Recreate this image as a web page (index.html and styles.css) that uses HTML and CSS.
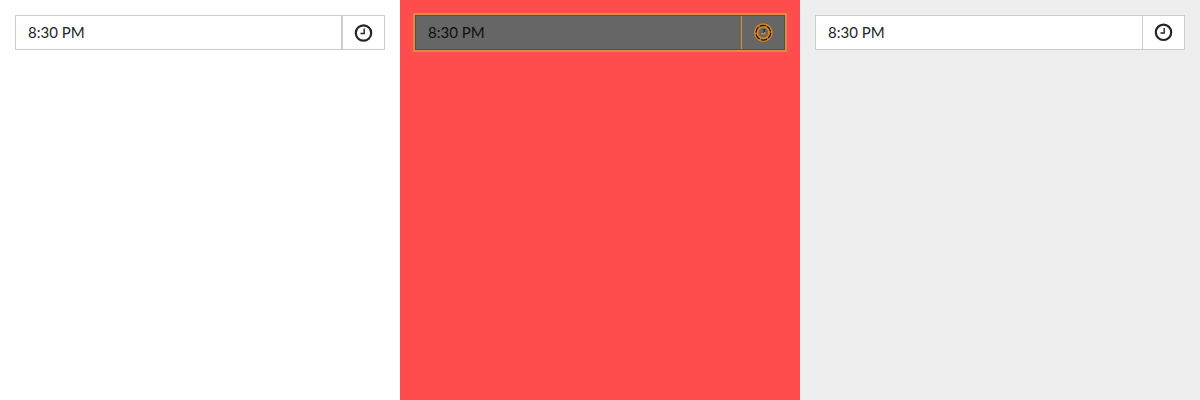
FILE: index.html
```
<!DOCTYPE html>
<html lang="en">
<head>
<meta charset="utf-8">
<title>Time picker</title>
<link rel="stylesheet" href="styles.css">
</head>
<body>
<main class="panels">
  <section class="panel">
    <div class="picker picker-double">
      <span class="value">8:30 PM</span>
      <span class="button"><svg class="clock" viewBox="0 0 20 20"><circle class="ring" cx="9.5" cy="10" r="7.7"/><path class="hands" d="M10.2 5.5V10.5H6.5"/></svg></span>
    </div>
  </section>
  <section class="panel panel-diff">
    <div class="picker picker-diff">
      <span class="value">8:30 PM</span>
      <span class="button"><svg class="clock" viewBox="0 0 20 20"><circle class="edge" cx="10.3" cy="9.7" r="8.5"/><circle class="edge" cx="10.3" cy="9.7" r="5.8"/><circle class="ring-dark" cx="10.3" cy="9.7" r="7.4"/><path class="hand-dark" d="M11.3 6V10"/><path class="hand-edge" d="M8 10.8H11.8V9"/></svg></span>
    </div>
  </section>
  <section class="panel panel-gray">
    <div class="picker">
      <span class="value">8:30 PM</span>
      <span class="button"><svg class="clock" viewBox="0 0 20 20"><circle class="ring" cx="9.5" cy="9.3" r="7.7"/><path class="hands" d="M10.2 5V10H6.5"/></svg></span>
    </div>
  </section>
</main>
</body>
</html>
```
FILE: styles.css
```
body {
  margin: 0;
  font-family: Lato, sans-serif;
}
.panels {
  display: grid;
  grid-template-columns: repeat(3, 400px);
  height: 400px;
}
.panel {
  box-sizing: border-box;
  padding: 15px;
  background: #fff;
}
.panel-diff { background: #ff4d4d; }
.panel-gray { background: #eee; }
.picker {
  box-sizing: border-box;
  display: flex;
  height: 35px;
  border: 1px solid #ccc;
  background: #fff;
  color: #212529;
  font-size: 15px;
  line-height: 33px;
}
.value {
  flex: 1;
  padding-left: 12px;
}
.button {
  box-sizing: border-box;
  display: flex;
  align-items: center;
  justify-content: center;
  width: 42px;
  border-left: 1px solid #ccc;
}
.picker-double .button {
  width: 43px;
  border-left-width: 2px;
}
.picker-diff {
  background: #666;
  border-color: #525252;
  color: #0d0f11;
  outline: 2px solid #dc8c3c;
}
.picker-diff .button {
  width: 43px;
  border-left-color: #dc8c3c;
}
.clock {
  width: 20px;
  height: 20px;
  fill: none;
}
.ring {
  stroke: #212529;
  stroke-width: 2.2;
}
.hands {
  stroke: #212529;
  stroke-width: 1.4;
}
.edge {
  stroke: #dc8420;
  stroke-width: 1.8;
}
.ring-dark {
  stroke: #15181c;
  stroke-width: 1.2;
  stroke-dasharray: 6 1.75;
}
.hand-dark {
  stroke: #20344a;
  stroke-width: 1.7;
}
.hand-edge {
  stroke: #dc8420;
  stroke-width: 1.4;
}
```
